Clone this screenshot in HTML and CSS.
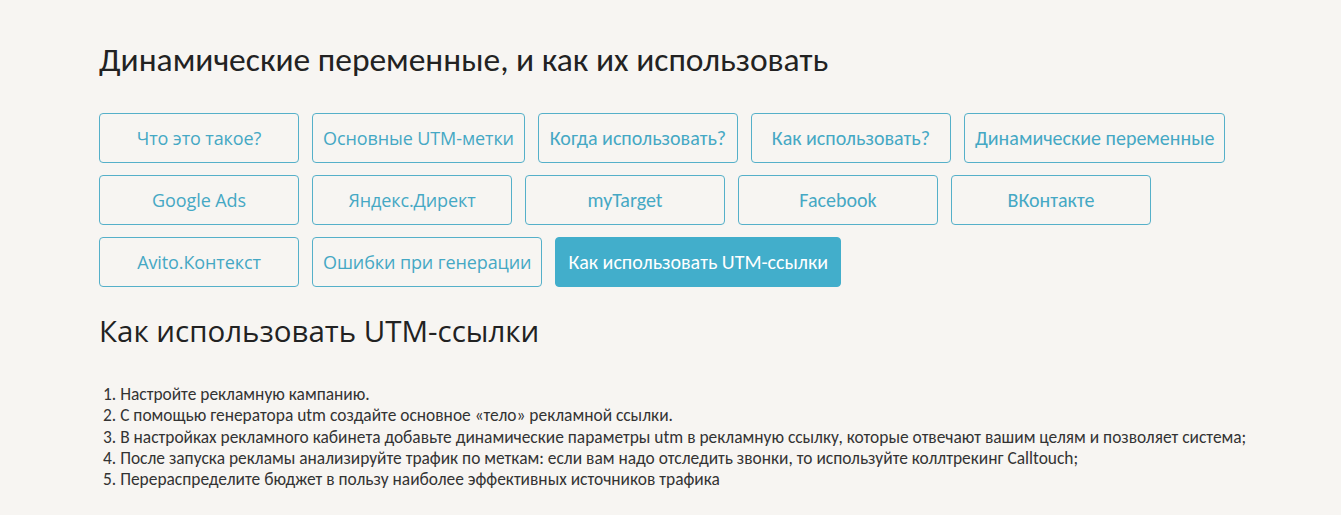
FILE: index.html
```html
<!DOCTYPE html>
<html lang="ru">
<head>
<meta charset="utf-8">
<title>Динамические переменные</title>
<link rel="stylesheet" href="styles.css">
</head>
<body>
<main class="page">
  <h1 class="title">Динамические переменные, и как их использовать</h1>
  <nav class="tabs">
    <a class="tab wide">Что это такое?</a>
    <a class="tab wide">Основные UTM-метки</a>
    <a class="tab narrow">Когда использовать?</a>
    <a class="tab narrow">Как использовать?</a>
    <a class="tab narrow">Динамические переменные</a>
    <a class="tab wide">Google Ads</a>
    <a class="tab wide">Яндекс.Директ</a>
    <a class="tab narrow">myTarget</a>
    <a class="tab narrow">Facebook</a>
    <a class="tab narrow">ВКонтакте</a>
    <a class="tab wide">Avito.Контекст</a>
    <a class="tab wide">Ошибки при генерации</a>
    <a class="tab narrow active">Как использовать UTM-ссылки</a>
  </nav>
  <h2 class="subtitle">Как использовать UTM-ссылки</h2>
  <ol class="steps">
    <li>Настройте рекламную кампанию.</li>
    <li>С помощью генератора utm создайте основное «тело» рекламной ссылки.</li>
    <li>В настройках рекламного кабинета добавьте динамические параметры utm в рекламную ссылку, которые отвечают вашим целям и позволяет система;</li>
    <li>После запуска рекламы анализируйте трафик по меткам: если вам надо отследить звонки, то используйте коллтрекинг Calltouch;</li>
    <li>Перераспределите бюджет в пользу наиболее эффективных источников трафика</li>
  </ol>
</main>
</body>
</html>
```
FILE: styles.css
```css
html, body {
  margin: 0;
  padding: 0;
  background: #f7f5f2;
}

.page {
  padding: 0 80px 0 99px;
  color: #222;
}

.title {
  margin: 0;
  padding-top: 40px;
  font-family: "Carlito", "Liberation Sans Narrow", "Roboto", sans-serif;
  font-weight: 400;
  font-size: 33.5px;
  line-height: 40px;
  color: #222;
}

.tabs {
  display: flex;
  flex-wrap: wrap;
  gap: 12px 13px;
  margin-top: 33px;
}

.tab {
  box-sizing: border-box;
  min-width: 200px;
  height: 50px;
  padding: 0 10px;
  display: flex;
  align-items: center;
  justify-content: center;
  border: 1px solid #55b0c9;
  border-radius: 4px;
  color: #45a8c4;
  text-decoration: none;
  white-space: nowrap;
}

.tab.wide {
  font-family: "Open Sans", sans-serif;
  font-size: 18px;
  letter-spacing: -0.1px;
}

.tab.narrow {
  font-family: "Carlito", "Liberation Sans Narrow", "Roboto", sans-serif;
  font-size: 20px;
}

.tab.active {
  background: #42aecb;
  border-color: #42aecb;
  color: #fff;
  padding: 0 12px;
}

.subtitle {
  margin: 24px 0 0;
  font-family: "Open Sans", sans-serif;
  font-weight: 400;
  font-size: 29.5px;
  line-height: 40px;
  color: #222;
}

.steps {
  margin: 33px 0 0;
  padding: 0 0 0 4px;
  list-style-position: inside;
  font-family: "Carlito", "Liberation Sans Narrow", "Roboto", sans-serif;
  font-size: 17.4px;
  line-height: 21.3px;
  color: #333;
}
```
